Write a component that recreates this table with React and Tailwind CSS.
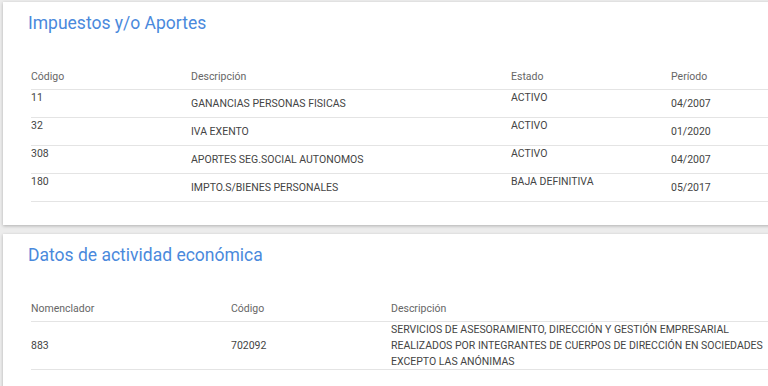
const impuestos = [
    { codigo: "11", descripcion: "GANANCIAS PERSONAS FISICAS", estado: "ACTIVO", periodo: "04/2007" },
    { codigo: "32", descripcion: "IVA EXENTO", estado: "ACTIVO", periodo: "01/2020" },
    { codigo: "308", descripcion: "APORTES SEG.SOCIAL AUTONOMOS", estado: "ACTIVO", periodo: "04/2007" },
    { codigo: "180", descripcion: "IMPTO.S/BIENES PERSONALES", estado: "BAJA DEFINITIVA", periodo: "05/2017" },
];

const actividades = [
    {
        nomenclador: "883",
        codigo: "702092",
        descripcion:
            "SERVICIOS DE ASESORAMIENTO, DIRECCIÓN Y GESTIÓN EMPRESARIAL REALIZADOS POR INTEGRANTES DE CUERPOS DE DIRECCIÓN EN SOCIEDADES EXCEPTO LAS ANÓNIMAS",
    },
];

function Card({ title, children }) {
    return (
        <div className="w-[900px] ml-[3px] bg-white shadow-[0_1px_3px_rgba(0,0,0,0.25)] pl-[25px] pt-[9px] pb-[23px]">
            <h2 className="text-[17.5px] leading-[24px] text-[#4a89dc] font-normal">{title}</h2>
            <div className="ml-[3px] mt-[30px]">{children}</div>
        </div>
    );
}

export default function App() {
    return (
        <div
            className="w-[768px] h-[386px] overflow-hidden bg-[#ececec] pt-[2px] flex flex-col gap-[9px]"
            style={{ fontFamily: "Roboto, 'Liberation Sans', sans-serif" }}
        >
            <Card title="Impuestos y/o Aportes">
                <div className="grid grid-cols-[160px_320px_160px_1fr] h-[25px] items-center border-b border-[#e4e4e4] text-[10.5px] text-[#666]">
                    <div>Código</div>
                    <div>Descripción</div>
                    <div>Estado</div>
                    <div>Período</div>
                </div>
                {impuestos.map((item, idx) => (
                    <div
                        key={idx}
                        className="grid grid-cols-[160px_320px_160px_1fr] h-[28px] border-b border-[#e4e4e4] text-[10.5px] leading-[14px] text-[#444]"
                    >
                        <div className="pt-[1px]">{item.codigo}</div>
                        <div className="self-center">{item.descripcion}</div>
                        <div className="pt-[1px]">{item.estado}</div>
                        <div className="self-center">{item.periodo}</div>
                    </div>
                ))}
            </Card>
            <Card title="Datos de actividad económica">
                <div className="grid grid-cols-[200px_160px_1fr] h-[25px] items-center border-b border-[#e4e4e4] text-[10.5px] text-[#666]">
                    <div>Nomenclador</div>
                    <div>Código</div>
                    <div>Descripción</div>
                </div>
                {actividades.map((item, idx) => (
                    <div
                        key={idx}
                        className="grid grid-cols-[200px_160px_1fr] h-[48px] border-b border-[#e4e4e4] text-[10.5px] leading-[16px] text-[#444]"
                    >
                        <div className="self-center">{item.nomenclador}</div>
                        <div className="self-center">{item.codigo}</div>
                        <div className="max-w-[380px]">{item.descripcion}</div>
                    </div>
                ))}
            </Card>
        </div>
    );
}
